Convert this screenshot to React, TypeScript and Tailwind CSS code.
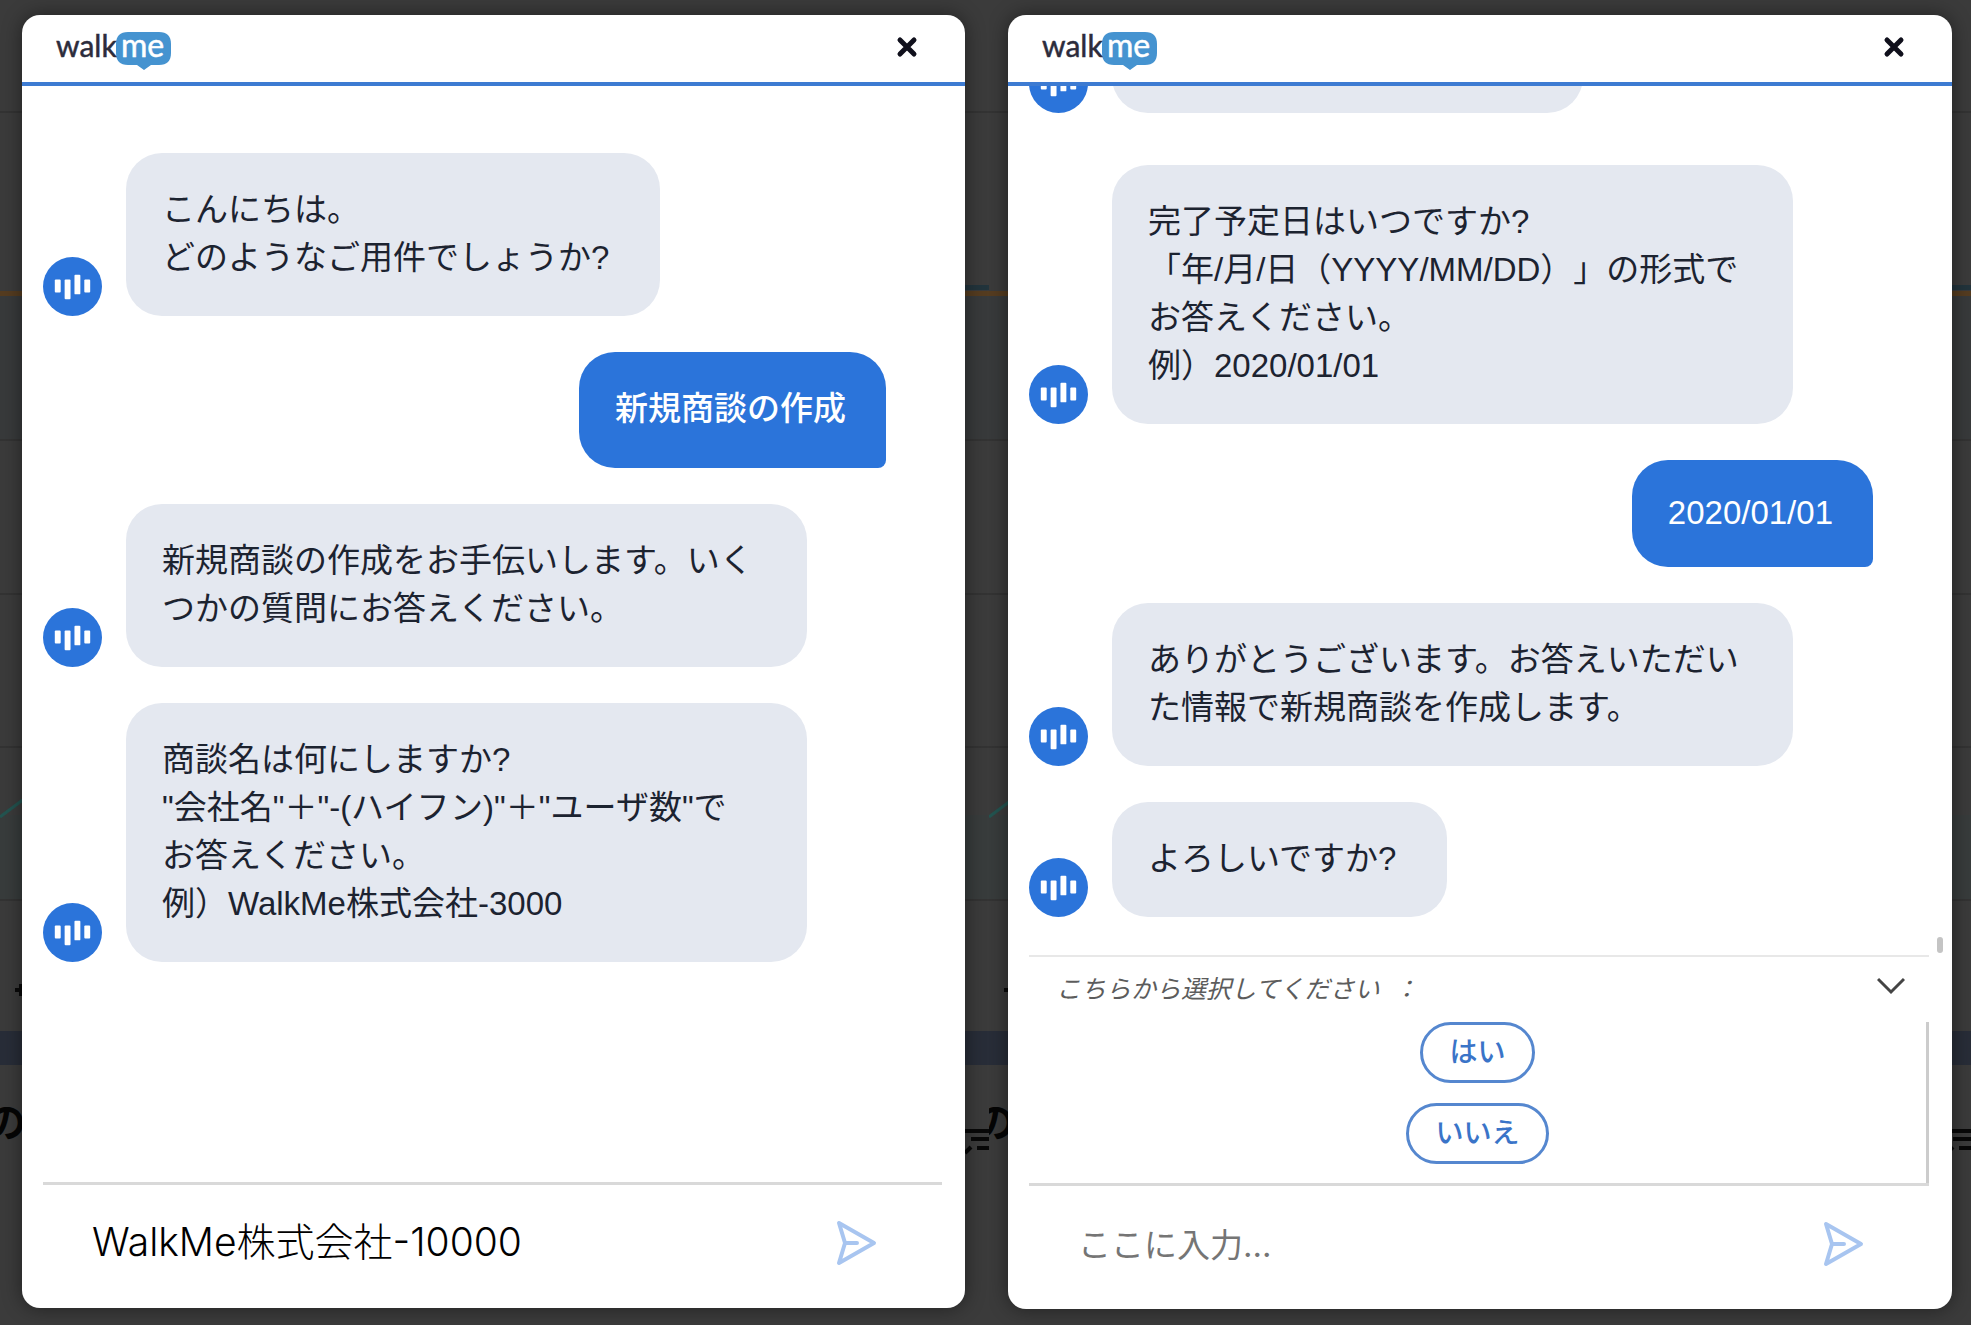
// WALKME CHAT - two conversation windows side by side
import { useState } from 'react';

interface Message {
  from: 'bot' | 'user';
  text: string;
}

interface ChatWindowProps {
  id: string;
  messages: Message[];
  draft?: string;
  options?: string[];
  scrolled?: boolean;
}

const firstChat: Message[] = [
  { from: 'bot', text: 'こんにちは。\nどのようなご用件でしょうか?' },
  { from: 'user', text: '新規商談の作成' },
  { from: 'bot', text: '新規商談の作成をお手伝いします。いくつかの質問にお答えください。' },
  {
    from: 'bot',
    text: '商談名は何にしますか?\n"会社名"＋"-(ハイフン)"＋"ユーザ数"でお答えください。\n例）WalkMe株式会社-3000',
  },
];

const secondChat: Message[] = [
  {
    from: 'bot',
    text: '完了予定日はいつですか?\n「年/月/日（YYYY/MM/DD）」の形式でお答えください。\n例）2020/01/01',
  },
  { from: 'user', text: '2020/01/01' },
  { from: 'bot', text: 'ありがとうございます。お答えいただいた情報で新規商談を作成します。' },
  { from: 'bot', text: 'よろしいですか?' },
];

function Logo() {
  return (
    <svg className="overflow-visible" width="116" height="42" viewBox="0 0 116 42" role="img" aria-label="walkme">
      <path
        d="M72 1h31c8 0 12 4 12 12v9c0 8-4 12-12 12h-8l-7 5-7-5h-9c-8 0-12-4-12-12v-9c0-8 4-12 12-12z"
        fill="#4593d0"
      />
      <text x="0" y="26" fontFamily="Lato, sans-serif" fontSize="30" fill="#2c2c3c" stroke="#2c2c3c" strokeWidth="0.5">walk</text>
      <text x="65" y="26" fontFamily="Lato, sans-serif" fontSize="32" fill="#ffffff" stroke="#ffffff" strokeWidth="0.5">me</text>
    </svg>
  );
}

function BotAvatar() {
  return (
    <svg className="shrink-0" width="59" height="59" viewBox="0 0 60 60" aria-hidden="true">
      <circle cx="30" cy="30" r="30" fill="#2b74da" />
      <g fill="#ffffff">
        <rect x="12" y="23" width="6" height="13" rx="1" />
        <rect x="22" y="23" width="6" height="20" rx="1" />
        <rect x="32" y="18" width="6" height="20" rx="1" />
        <rect x="42" y="23" width="6" height="13" rx="1" />
      </g>
    </svg>
  );
}

// Dimmed dashboard page that shows behind each window
function Backdrop() {
  return (
    <svg className="absolute inset-0 h-full w-full" aria-hidden="true">
      <rect y="295" width="100%" height="144" fill="#383a3b" />
      <rect y="815" width="100%" height="84" fill="#383c3c" />
      <g fill="#333333">
        <rect y="111" width="100%" height="2" />
        <rect y="439" width="100%" height="2" />
        <rect y="593" width="100%" height="2" />
        <rect y="746" width="100%" height="2" />
        <rect y="899" width="100%" height="2" />
      </g>
      <rect x="50%" y="285" width="50%" height="5" fill="#22343c" />
      <rect y="291" width="100%" height="5" fill="#553c20" />
      <path d="M0 817L24 799" stroke="#235450" strokeWidth="3" />
      <path d="M15 990h8M21 984v12" stroke="#0a0a0a" strokeWidth="4" />
      <rect y="1031" width="100%" height="34" fill="#282d38" />
      <text x="-14" y="1137" fontSize="40" fontWeight="700" fill="#050505">の</text>
      <svg x="100%" y="1126" width="24" height="30" overflow="visible">
        <path d="M-24 5h24M-18 13h18M-12 22h12M-24 27l6-6" stroke="#080808" strokeWidth="4" />
      </svg>
    </svg>
  );
}

function Bubble({ message }: { message: Message }) {
  if (message.from === 'user') {
    // digits only bubbles sit on a shorter line
    const latin = /^[\x20-\x7e]+$/.test(message.text);
    return (
      <div className="mr-[79px] self-end rounded-[36px] rounded-br-lg bg-[#2b74da] pt-[33px] pr-[40px] pb-[35px] pl-[36px] font-medium text-white">
        <p className={latin ? 'leading-[39px]' : 'leading-[48px]'}>{message.text}</p>
      </div>
    );
  }

  return (
    <div className="flex items-end gap-6">
      <BotAvatar />
      <div className="max-w-[681px] rounded-[36px] bg-[#e4e8f0] pt-[33px] pr-[51px] pb-[34px] pl-[36px] text-[#1c2330]">
        <p className="leading-[48px] whitespace-pre-line">{message.text}</p>
      </div>
    </div>
  );
}

function ChatWindow({ id, messages, draft = '', options, scrolled }: ChatWindowProps) {
  const [value, setValue] = useState(draft);

  return (
    <div className="relative flex h-full flex-col overflow-hidden rounded-[18px] bg-white shadow-[0_0_20px_rgba(0,0,0,0.45)]">
      {/* Header */}
      <header className="flex h-[71px] shrink-0 items-start justify-between border-b-4 border-[#3d7bd2] pt-4 pr-[46px] pl-[34px]">
        <Logo />
        <button type="button" aria-label="閉じる" className="mt-1">
          <svg width="24" height="24" viewBox="0 0 24 24" fill="none" stroke="#10101c" strokeWidth="5" strokeLinecap="round">
            <path d="M5 5l14 14M19 5L5 19" />
          </svg>
        </button>
      </header>

      {/* Messages */}
      <div
        className={
          scrolled
            ? 'relative flex min-h-0 flex-1 flex-col justify-end gap-9 overflow-hidden pb-[38px] pl-[21px] text-[33px]'
            : 'relative flex min-h-0 flex-1 flex-col gap-9 overflow-hidden pt-[67px] pl-[21px] text-[33px]'
        }
      >
        {scrolled && (
          <div className="mb-4 flex shrink-0 items-end gap-6">
            <BotAvatar />
            <div className="h-[115px] w-[471px] rounded-[36px] bg-[#e4e8f0]" />
          </div>
        )}
        {messages.map((message) => (
          <Bubble key={message.text} message={message} />
        ))}
        {scrolled && <div className="absolute right-[9px] bottom-[2px] h-4 w-[6px] rounded-sm bg-[#c4c4c4]" />}
      </div>

      {/* Quick replies */}
      {options && (
        <div className="mr-[23px] ml-[21px] shrink-0 border-t-2 border-[#e8e8e8]">
          <div className="flex h-[65px] items-center justify-between pr-[24px] pl-[27px]">
            <p className="text-[25px] text-[#5c5c5c] italic">こちらから選択してください &nbsp;：</p>
            <button type="button" aria-label="選択肢を閉じる" className="pb-2">
              <svg width="28" height="18" viewBox="0 0 28 18" fill="none" stroke="#444444" strokeWidth="3">
                <path d="M1 2l13 13L27 2" />
              </svg>
            </button>
          </div>
          <div className="flex flex-col items-center gap-5 border-r-[3px] border-[#cccccc] pb-[19px]">
            {options.map((option) => (
              <button
                key={option}
                type="button"
                className="h-[61px] rounded-full border-[3px] border-[#5587cf] px-[26px] text-[28px] font-medium text-[#3a74c8]"
              >
                {option}
              </button>
            ))}
          </div>
        </div>
      )}

      {/* Input */}
      <form
        className="mr-[23px] ml-[21px] flex h-[126px] shrink-0 items-center border-t-[3px] border-[#d9d9d9] pr-[62px] pb-2 pl-[49px]"
        onSubmit={(e) => e.preventDefault()}
      >
        <input
          id={id}
          type="text"
          aria-label="メッセージ"
          value={value}
          onChange={(e) => setValue(e.target.value)}
          placeholder="ここに入力..."
          className="min-w-0 flex-1 bg-transparent font-['Inter','Noto_Sans_CJK_JP',sans-serif] text-[39px] font-light text-black outline-none placeholder:text-[33px] placeholder:font-normal placeholder:text-[#757575]"
        />
        <button type="submit" aria-label="送信">
          <svg width="46" height="46" viewBox="0 0 46 46" fill="none" stroke="#a8c5f0" strokeWidth="4" strokeLinecap="round" strokeLinejoin="round">
            <path d="M5 3l35 20L5 43l6-20zM11 23h12" />
          </svg>
        </button>
      </form>
    </div>
  );
}

export default function App() {
  return (
    <main
      lang="ja"
      className="grid h-screen grid-cols-[989fr_982fr] grid-rows-1 bg-[#3b3b3b] font-['Liberation_Sans','Noto_Sans_CJK_JP',sans-serif] [text-spacing-trim:space-all]"
    >
      <section className="relative min-h-0 overflow-hidden pt-[15px] pr-[24px] pb-[17px] pl-[22px]">
        <Backdrop />
        <ChatWindow id="first-message" messages={firstChat} draft="WalkMe株式会社-10000" />
      </section>
      <section className="relative min-h-0 overflow-hidden px-[19px] pt-[15px] pb-4">
        <Backdrop />
        <ChatWindow id="second-message" messages={secondChat} options={['はい', 'いいえ']} scrolled />
      </section>
    </main>
  );
}
